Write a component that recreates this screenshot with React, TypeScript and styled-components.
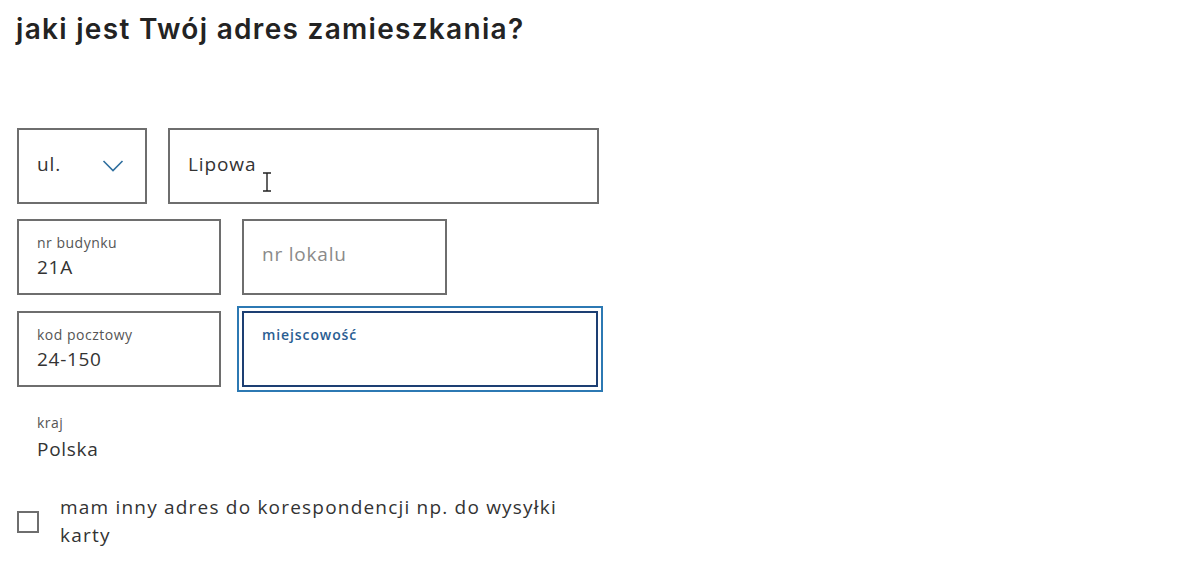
import React from "react";
import styled, { createGlobalStyle } from "styled-components";

const Global = createGlobalStyle`
  html, body { margin: 0; padding: 0; background: #fff; }
  body { font-family: "Open Sans", "Noto Sans", sans-serif; color: #333; }
  * { box-sizing: border-box; }
`;

const Page = styled.div`
  padding: 8px 0 0 17px;
  width: 1200px;
  height: 577px;
  overflow: hidden;
`;

const Heading = styled.h1`
  margin: 0 0 0 -1px;
  font-family: "Inter", sans-serif;
  font-weight: 600;
  font-size: 28px;
  line-height: 42px;
  letter-spacing: 1.3px;
  color: #232323;
`;

const Form = styled.div`
  margin-top: 78px;
  display: flex;
  flex-direction: column;
`;

const Row = styled.div<{ $gap: number; $mt?: number }>`
  display: flex;
  gap: ${(p) => p.$gap}px;
  margin-top: ${(p) => p.$mt ?? 0}px;
`;

const Field = styled.div<{ $w: number; $h?: number; $focus?: boolean }>`
  position: relative;
  width: ${(p) => p.$w}px;
  height: ${(p) => p.$h ?? 76}px;
  border: 2px solid ${(p) => (p.$focus ? "#1d3f73" : "#6e6e6e")};
  box-shadow: ${(p) => (p.$focus ? "0 0 0 3px #fff, 0 0 0 5px #2c79b3" : "none")};
  padding: 12px 18px 0 18px;
  display: flex;
  flex-direction: column;
  background: #fff;
`;

const SingleField = styled(Field)<{ $start?: boolean }>`
  padding: 0 18px;
  flex-direction: row;
  align-items: center;
  justify-content: ${(p) => (p.$start ? "flex-start" : "space-between")};
`;

const Label = styled.span<{ $focus?: boolean }>`
  font-size: 14px;
  line-height: 20px;
  color: ${(p) => (p.$focus ? "#2a5d92" : "#555")};
  font-weight: ${(p) => (p.$focus ? 600 : 400)};
  letter-spacing: ${(p) => (p.$focus ? 0.9 : 0.5)}px;
`;

const Value = styled.span`
  font-size: 19px;
  line-height: 28px;
  color: #333;
  letter-spacing: 0.7px;
`;

const Placeholder = styled.span`
  font-size: 19px;
  color: #8a8a8a;
  letter-spacing: 0.8px;
  margin-top: -6px;
`;

const InlineText = styled.span`
  font-size: 19px;
  color: #333;
  margin-top: -4px;
  letter-spacing: 0.9px;
`;

const Chevron = styled.svg`
  margin-right: 3px;
`;

const Cursor = styled.svg`
  position: absolute;
  left: 92px;
  top: 42px;
`;

const Plain = styled.div`
  margin-top: 24px;
  padding: 2px 20px 0;
  display: flex;
  flex-direction: column;
  gap: 2px;
`;

const CheckRow = styled.label`
  margin-top: 30px;
  display: flex;
  align-items: center;
  gap: 21px;
`;

const Box = styled.span`
  flex: none;
  width: 22px;
  height: 22px;
  border: 2px solid #6e6e6e;
  margin-top: 2px;
`;

const CheckText = styled.span`
  width: 512px;
  font-size: 19px;
  line-height: 28px;
  color: #333;
  letter-spacing: 1.2px;
`;

export default function App() {
  return (
    <>
      <Global />
      <Page>
        <Heading>jaki jest Twój adres zamieszkania?</Heading>
        <Form>
          <Row $gap={21}>
            <SingleField $w={130}>
              <InlineText>ul.</InlineText>
              <Chevron width="22" height="14" viewBox="0 0 22 14">
                <path d="M1.5 2 L11 11.5 L20.5 2" fill="none" stroke="#2f6f9f" strokeWidth="1.6" />
              </Chevron>
            </SingleField>
            <SingleField $w={431} $start>
              <InlineText>Lipowa</InlineText>
              <Cursor width="10" height="20" viewBox="0 0 10 20">
                <path d="M1 1 H9 M5 1 V19 M1 19 H9" stroke="#222" strokeWidth="1.4" fill="none" />
              </Cursor>
            </SingleField>
          </Row>
          <Row $gap={21} $mt={15}>
            <Field $w={204}>
              <Label>nr budynku</Label>
              <Value>21A</Value>
            </Field>
            <SingleField $w={205}>
              <Placeholder>nr lokalu</Placeholder>
            </SingleField>
          </Row>
          <Row $gap={21} $mt={16}>
            <Field $w={204}>
              <Label>kod pocztowy</Label>
              <Value>24-150</Value>
            </Field>
            <Field $w={356} $focus>
              <Label $focus>miejscowość</Label>
            </Field>
          </Row>
          <Plain>
            <Label>kraj</Label>
            <Value>Polska</Value>
          </Plain>
          <CheckRow>
            <Box />
            <CheckText>mam inny adres do korespondencji np. do wysyłki karty</CheckText>
          </CheckRow>
        </Form>
      </Page>
    </>
  );
}
